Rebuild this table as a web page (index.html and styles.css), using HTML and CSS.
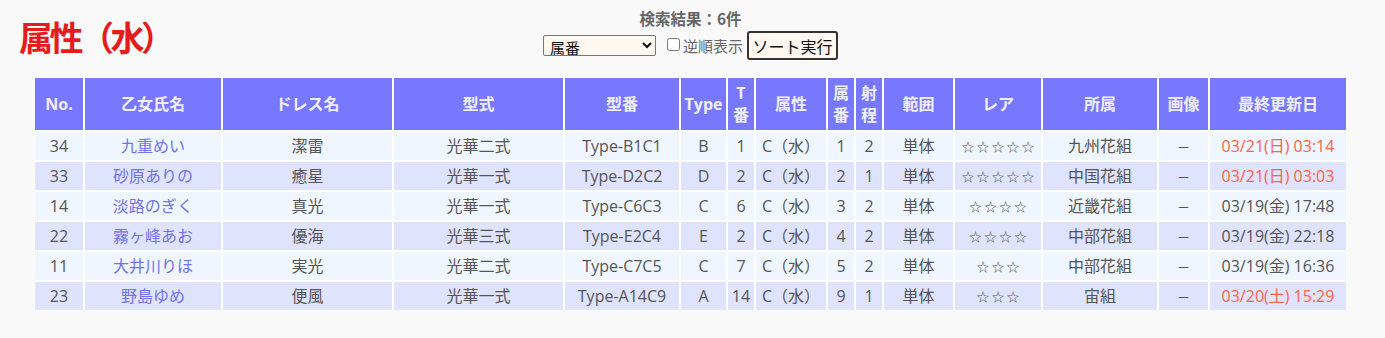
FILE: index.html
```html
<!DOCTYPE html>
<html lang="ja">
<head>
<meta charset="utf-8">
<title>属性（水）</title>
<link rel="stylesheet" href="styles.css">
</head>
<body>
<div class="top">
  <h1 class="title">属性（水）</h1>
  <div class="center">
    <div class="count">検索結果：6件</div>
    <form class="sort">
      <select class="sort-key">
        <option>属番</option>
        <option>No.</option>
        <option>乙女氏名</option>
      </select>
      <label class="rev"><input type="checkbox" class="rev-box">逆順表示</label>
      <button type="button" class="sort-btn">ソート実行</button>
    </form>
  </div>
  <div></div>
</div>
<table class="list">
  <colgroup>
    <col class="c-no"><col class="c-name"><col class="c-dress"><col class="c-model"><col class="c-num">
    <col class="c-type"><col class="c-tn"><col class="c-attr"><col class="c-an"><col class="c-range">
    <col class="c-area"><col class="c-rare"><col class="c-team"><col class="c-img"><col class="c-date">
  </colgroup>
  <thead>
    <tr>
      <th>No.</th><th>乙女氏名</th><th>ドレス名</th><th>型式</th><th>型番</th><th>Type</th><th>T<br>番</th><th>属性</th><th>属<br>番</th><th>射<br>程</th><th>範囲</th><th>レア</th><th>所属</th><th>画像</th><th>最終更新日</th>
    </tr>
  </thead>
  <tbody>
    <tr>
      <td>34</td><td class="name">九重めい</td><td>潔雷</td><td>光華二式</td><td>Type-B1C1</td><td>B</td><td>1</td><td>C（水）</td><td>1</td><td>2</td><td>単体</td><td><span class="stars">☆☆☆☆☆</span></td><td>九州花組</td><td><span class="dash">－</span></td><td class="new">03/21(日) 03:14</td>
    </tr>
    <tr>
      <td>33</td><td class="name">砂原ありの</td><td>癒星</td><td>光華一式</td><td>Type-D2C2</td><td>D</td><td>2</td><td>C（水）</td><td>2</td><td>1</td><td>単体</td><td><span class="stars">☆☆☆☆☆</span></td><td>中国花組</td><td><span class="dash">－</span></td><td class="new">03/21(日) 03:03</td>
    </tr>
    <tr>
      <td>14</td><td class="name">淡路のぎく</td><td>真光</td><td>光華一式</td><td>Type-C6C3</td><td>C</td><td>6</td><td>C（水）</td><td>3</td><td>2</td><td>単体</td><td><span class="stars">☆☆☆☆</span></td><td>近畿花組</td><td><span class="dash">－</span></td><td>03/19(金) 17:48</td>
    </tr>
    <tr>
      <td>22</td><td class="name">霧ヶ峰あお</td><td>優海</td><td>光華三式</td><td>Type-E2C4</td><td>E</td><td>2</td><td>C（水）</td><td>4</td><td>2</td><td>単体</td><td><span class="stars">☆☆☆☆</span></td><td>中部花組</td><td><span class="dash">－</span></td><td>03/19(金) 22:18</td>
    </tr>
    <tr>
      <td>11</td><td class="name">大井川りほ</td><td>実光</td><td>光華二式</td><td>Type-C7C5</td><td>C</td><td>7</td><td>C（水）</td><td>5</td><td>2</td><td>単体</td><td><span class="stars">☆☆☆</span></td><td>中部花組</td><td><span class="dash">－</span></td><td>03/19(金) 16:36</td>
    </tr>
    <tr>
      <td>23</td><td class="name">野島ゆめ</td><td>便風</td><td>光華一式</td><td>Type-A14C9</td><td>A</td><td>14</td><td>C（水）</td><td>9</td><td>1</td><td>単体</td><td><span class="stars">☆☆☆</span></td><td>宙組</td><td><span class="dash">－</span></td><td class="new">03/20(土) 15:29</td>
    </tr>
  </tbody>
</table>
</body>
</html>
```
FILE: styles.css
```css
html, body {
  background: #f9f9f9;
}
body {
  margin: 8px;
  font-family: "Open Sans", "Noto Sans CJK JP", sans-serif;
  color: #555;
}

.top {
  display: grid;
  grid-template-columns: 1fr auto 1fr;
  height: 69px;
}
.title {
  margin: 6px 0 0 0;
  padding-left: 11px;
  font-family: "Noto Sans CJK JP", sans-serif;
  font-size: 34px;
  line-height: 46px;
  font-weight: 700;
  letter-spacing: -3.5px;
  color: #e41c1c;
}
.center {
  margin-right: 4px;
  display: flex;
  flex-direction: column;
  align-items: center;
}
.count {
  font-family: "Noto Sans CJK JP", sans-serif;
  font-weight: 700;
  font-size: 15.5px;
  line-height: 21px;
  color: #666;
}
.sort {
  margin: 2px 0 0 0;
  display: flex;
  align-items: center;
  height: 29px;
}
.sort-key {
  width: 113px;
  height: 21px;
  margin: 0 7px 0 0;
  padding: 0 2px;
  font-family: "Noto Sans CJK JP", sans-serif;
  font-size: 15px;
  color: #111;
  background-color: #fff8f0;
  border: 1px solid #777;
  border-radius: 2px;
}
.rev {
  display: flex;
  align-items: center;
  font-family: "Noto Sans CJK JP", sans-serif;
  font-size: 15px;
  color: #666;
}
.rev-box {
  width: 13px;
  height: 13px;
  margin: 0 3px 2px 4px;
}
.sort-btn {
  width: 91px;
  height: 29px;
  margin: 0 0 0 4px;
  padding: 0;
  font-family: "Noto Sans CJK JP", sans-serif;
  font-size: 16px;
  color: #111;
  background: #fff8f0;
  border: 2px solid #333;
  border-radius: 3px;
}

.list {
  table-layout: fixed;
  width: 1313px;
  margin: 0 0 0 26px;
  border-collapse: separate;
  border-spacing: 0;
  font-size: 16px;
}
.list th, .list td {
  box-sizing: border-box;
  border: 1px solid #fff;
  text-align: center;
  vertical-align: middle;
  white-space: nowrap;
  padding: 0;
}
.list th {
  height: 54px;
  background: #7878ff;
  color: #eeeeff;
  font-weight: 700;
  line-height: 22px;
}
.list td {
  height: 30px;
  line-height: 20px;
}
.list tbody tr:nth-child(odd) td { background: #eff6ff; }
.list tbody tr:nth-child(even) td { background: #dfe3fe; }

.list td.name { color: #7272ee; }
.list td.new { color: #ff6347; }

.stars {
  font-family: "Noto Sans CJK JP", sans-serif;
  font-size: 12.5px;
  letter-spacing: 2.5px;
  padding-left: 2.5px;
  color: #555;
}
.dash {
  font-family: "Noto Sans CJK JP", sans-serif;
  font-size: 13px;
}

.c-no { width: 50px; }
.c-name { width: 138px; }
.c-dress { width: 171px; }
.c-model { width: 171px; }
.c-num { width: 116px; }
.c-type { width: 47px; }
.c-tn { width: 28px; }
.c-attr { width: 72px; }
.c-an { width: 28px; }
.c-range { width: 28px; }
.c-area { width: 71px; }
.c-rare { width: 88px; }
.c-team { width: 116px; }
.c-img { width: 51px; }
.c-date { width: 138px; }
```
